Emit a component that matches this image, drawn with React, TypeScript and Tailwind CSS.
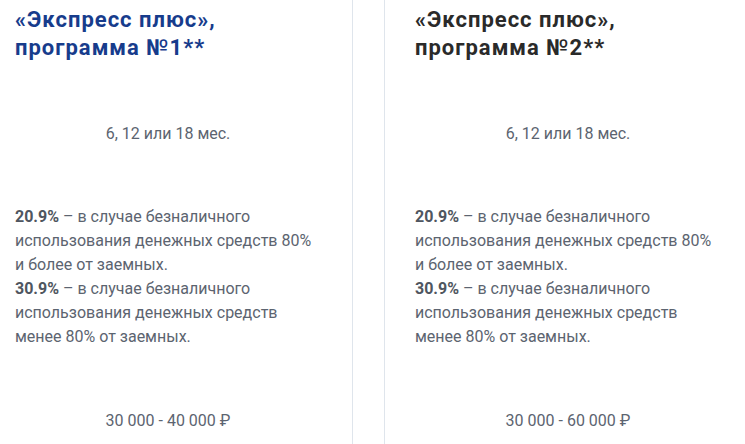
import React from 'react'

type Plan = {
  title: string
  sum: string
  titleColor: string
}

function Card({ plan, first }: { plan: Plan; first: boolean }) {
  return (
    <div
      className={
        first
          ? 'w-[353px] h-[444px] pl-[15px] border-r border-[#dfe5ec] flex flex-col'
          : 'w-[361px] h-[444px] ml-[31px] pl-[30px] border-l border-[#dfe5ec] flex flex-col'
      }
    >
      <h3 className={`mt-[6px] text-[22px] leading-[28px] font-bold tracking-[1px] ${plan.titleColor}`}>
        {plan.title.split('\n').map((l, i) => (
          <span key={i} className="block">{l}</span>
        ))}
      </h3>
      <div className="w-[306px] mt-[60px] text-center text-base leading-6 text-[#5c6470]">
        6, 12 или 18 мес.
      </div>
      <div className="w-[300px] mt-[59px] text-base leading-6 text-[#5c6470]">
        <p>
          <b className="font-bold text-[#4f5660]">20.9%</b> – в случае безналичного использования денежных средств 80% и более от заемных.
        </p>
        <p>
          <b className="font-bold text-[#4f5660]">30.9%</b> – в случае безналичного использования денежных средств менее 80% от заемных.
        </p>
      </div>
      <div className="w-[306px] mt-[60px] text-center text-base leading-6 text-[#5c6470]">
        {plan.sum}
      </div>
    </div>
  )
}

export default function App() {
  const plans: Plan[] = [
    { title: '«Экспресс плюс»,\nпрограмма №1**', sum: '30 000 - 40 000 ₽', titleColor: 'text-[#173c8c]' },
    { title: '«Экспресс плюс»,\nпрограмма №2**', sum: '30 000 - 60 000 ₽', titleColor: 'text-[#2a2a2a]' },
  ]
  return (
    <div className="w-[745px] h-[444px] overflow-hidden bg-white flex" style={{ fontFamily: 'Roboto, "Noto Sans", sans-serif' }}>
      {plans.map((p, i) => (
        <Card key={i} plan={p} first={i === 0} />
      ))}
    </div>
  )
}
